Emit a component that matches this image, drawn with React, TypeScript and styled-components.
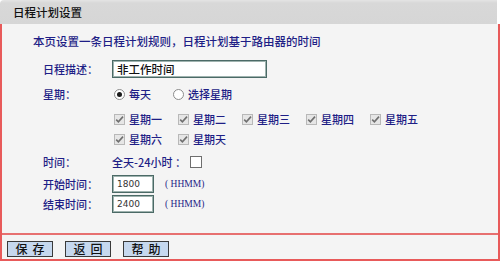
import React from "react";
import styled, { createGlobalStyle } from "styled-components";

const red = "#e85a5a";
const navy = "#1e1e86";
const cjk = `"Noto Sans CJK SC", "Noto Sans", sans-serif`;

const GlobalStyle = createGlobalStyle`
  html, body {
    margin: 0;
    padding: 0;
    background: #ffffff;
  }
  body {
    font-family: ${cjk};
  }
`;

const Frame = styled.div`
  width: 500px;
  height: 261px;
  display: flex;
  flex-direction: column;
  background: #ffffff;
  overflow: hidden;
`;

const Header = styled.div`
  height: 24px;
  width: 497px;
  box-sizing: border-box;
  padding-left: 13px;
  display: flex;
  align-items: center;
  background: linear-gradient(#e4e4e4 0, #d8d8d8 3px, #d6d6d6 100%);
  border-top-left-radius: 4px;
  font-size: 11.5px;
  font-weight: 500;
  color: #111;
`;

const Panel = styled.div`
  width: 500px;
  box-sizing: border-box;
  border-left: 2px solid ${red};
  border-right: 2px solid ${red};
  background: #f4f4f4;
  display: flex;
  flex-direction: column;
`;

const Content = styled.div`
  height: 211px;
  box-sizing: border-box;
  padding: 9px 0 0 31px;
  border-bottom: 2px solid #e77070;
`;

const Intro = styled.div`
  font-size: 11.5px;
  font-weight: 500;
  line-height: 16px;
  color: ${navy};
  white-space: nowrap;
`;

const Form = styled.div`
  margin: 8px 0 0 10px;
  display: grid;
  grid-template-columns: 69px 1fr;
  font-size: 11px;
  font-weight: 500;
  color: ${navy};
`;

const Label = styled.div<{ h: number }>`
  height: ${(p) => p.h}px;
  display: flex;
  align-items: center;
  white-space: nowrap;
`;

const Value = styled.div<{ h: number }>`
  height: ${(p) => p.h}px;
  display: flex;
  align-items: center;
  white-space: nowrap;
`;

const TextBox = styled.div<{ w: number }>`
  width: ${(p) => p.w}px;
  height: 18px;
  box-sizing: border-box;
  border: 1px solid #4b6a66;
  box-shadow: inset 0 0 0 1px #9fb3af;
  background: #ffffff;
  display: flex;
  align-items: center;
`;

const DescText = styled.span`
  padding-left: 4px;
  font-size: 11.5px;
  color: #111;
`;

const NumText = styled.span`
  padding-left: 4px;
  font-family: "DejaVu Sans", sans-serif;
  font-size: 9px;
  font-weight: 400;
  color: #333;
`;

const Hint = styled.span`
  margin-left: 11px;
  font-family: "Liberation Serif", serif;
  font-size: 9.5px;
  font-weight: 400;
  color: ${navy};
  white-space: pre;
`;

const Choice = styled.label<{ w?: number }>`
  display: flex;
  align-items: center;
  gap: 4px;
  margin-left: 2px;
  width: ${(p) => (p.w ? `${p.w}px` : "auto")};
`;

const RadioDot = styled.span<{ on?: boolean }>`
  width: 11px;
  height: 11px;
  box-sizing: border-box;
  border-radius: 50%;
  border: 1px solid #8c8c8c;
  background: #ffffff;
  display: flex;
  align-items: center;
  justify-content: center;
  &::after {
    content: "";
    width: 5px;
    height: 5px;
    border-radius: 50%;
    background: ${(p) => (p.on ? "#1a1a1a" : "transparent")};
  }
`;

const Box = styled.span<{ disabled?: boolean; size?: number }>`
  width: ${(p) => p.size ?? 11}px;
  height: ${(p) => p.size ?? 11}px;
  box-sizing: border-box;
  border: 1px solid ${(p) => (p.disabled ? "#b8b8b8" : "#6e6e6e")};
  background: ${(p) => (p.disabled ? "#e6e6e6" : "#ffffff")};
  display: flex;
  align-items: center;
  justify-content: center;
`;

const Gap = styled.span`
  display: inline-block;
  width: 4px;
`;

const Days = styled.div`
  display: flex;
  flex-direction: column;
  padding-top: 2px;
`;

const DayLine = styled.div`
  height: 20px;
  display: flex;
  align-items: center;
`;

const Footer = styled.div`
  height: 26px;
  box-sizing: border-box;
  padding: 6px 0 0 5px;
  border-bottom: 2px solid ${red};
  display: flex;
  gap: 12px;
  align-items: flex-start;
`;

const Button = styled.button`
  width: 46px;
  height: 16px;
  padding: 0;
  box-sizing: border-box;
  border: 1px solid #3a3a3a;
  background: #c6d8ee;
  font-family: ${cjk};
  font-size: 12px;
  font-weight: 500;
  line-height: 14px;
  letter-spacing: 5px;
  text-indent: 5px;
  color: #111;
`;

function Check() {
  return (
    <svg width="9" height="9" viewBox="0 0 9 9">
      <path d="M1.2 4.6 L3.4 6.8 L8 1.6" fill="none" stroke="#6f6f6f" strokeWidth="1.6" />
    </svg>
  );
}

const dayNames = [
  ["星期一", "星期二", "星期三", "星期四", "星期五"],
  ["星期六", "星期天"],
];

export default function App() {
  return (
    <Frame>
      <GlobalStyle />
      <Header>日程计划设置</Header>
      <Panel>
        <Content>
          <Intro>本页设置一条日程计划规则，日程计划基于路由器的时间</Intro>
          <Form>
            <Label h={24}>日程描述：</Label>
            <Value h={24}>
              <TextBox w={155}>
                <DescText>非工作时间</DescText>
              </TextBox>
            </Value>

            <Label h={26}>星期：</Label>
            <Value h={26}>
              <Choice w={57}>
                <RadioDot on />
                每天
              </Choice>
              <Choice>
                <RadioDot />
                选择星期
              </Choice>
            </Value>

            <Label h={44} />
            <Days>
              {dayNames.map((line, i) => (
                <DayLine key={i}>
                  {line.map((d) => (
                    <Choice key={d} w={62}>
                      <Box disabled>
                        <Check />
                      </Box>
                      {d}
                    </Choice>
                  ))}
                </DayLine>
              ))}
            </Days>

            <Label h={22}>时间：</Label>
            <Value h={22}>
              全天-24小时 ：
              <Gap />
              <Box size={12} />
            </Value>

            <Label h={22}>开始时间：</Label>
            <Value h={22}>
              <TextBox w={42}>
                <NumText>1800</NumText>
              </TextBox>
              <Hint>( HHMM)</Hint>
            </Value>

            <Label h={18}>结束时间：</Label>
            <Value h={18}>
              <TextBox w={42}>
                <NumText>2400</NumText>
              </TextBox>
              <Hint>( HHMM)</Hint>
            </Value>
          </Form>
        </Content>
        <Footer>
          <Button>保存</Button>
          <Button>返回</Button>
          <Button>帮助</Button>
        </Footer>
      </Panel>
    </Frame>
  );
}
